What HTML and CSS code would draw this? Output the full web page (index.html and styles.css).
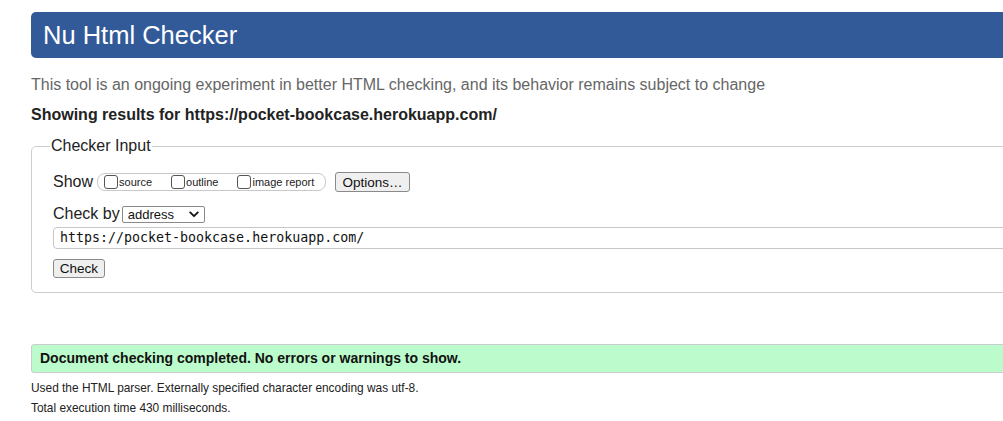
FILE: index.html
```html
<!DOCTYPE html>
<html lang="en">
<head>
<meta charset="utf-8">
<title>Nu Html Checker</title>
<link rel="stylesheet" href="styles.css">
</head>
<body>
<div class="page">
  <h1 class="title">Nu Html Checker</h1>
  <p class="note">This tool is an ongoing experiment in better HTML checking, and its behavior remains subject to change</p>
  <p class="showing">Showing results for https://pocket-bookcase.herokuapp.com/</p>
  <fieldset class="input-box">
    <legend class="legend">Checker Input</legend>
    <div class="row show-row">
      <span class="label">Show</span>
      <span class="opts">
        <label class="opt"><span class="cb"></span>source</label>
        <label class="opt"><span class="cb"></span>outline</label>
        <label class="opt"><span class="cb"></span>image report</label>
      </span>
      <button class="btn options" type="button">Options…</button>
    </div>
    <div class="row by-row">
      <span class="label">Check by</span>
      <span class="select">address<svg class="chev" width="10" height="7" viewBox="0 0 10 7"><path d="M1.2 1.4 L5 5.2 L8.8 1.4" fill="none" stroke="#111" stroke-width="1.8" stroke-linecap="round" stroke-linejoin="round"/></svg></span>
    </div>
    <div class="url">https://pocket-bookcase.herokuapp.com/</div>
    <div class="row">
      <button class="btn check" type="button">Check</button>
    </div>
  </fieldset>
  <div class="success">Document checking completed. No errors or warnings to show.</div>
  <p class="meta">Used the HTML parser. Externally specified character encoding was utf-8.</p>
  <p class="meta">Total execution time 430 milliseconds.</p>
</div>
</body>
</html>
```
FILE: styles.css
```css
html, body {
  margin: 0;
  padding: 0;
  overflow: hidden;
  background: #fff;
}
body {
  font-family: "Liberation Sans", Arial, Helvetica, sans-serif;
  color: #111;
}
.page {
  width: 1160px;
  padding: 12px 0 0 31px;
}
.title {
  margin: 0;
  height: 46px;
  line-height: 46px;
  padding: 0 12px;
  background: #335a98;
  color: #fff;
  font-size: 25.5px;
  font-weight: normal;
  border-radius: 5px;
}
.note {
  margin: 17px 0 0;
  font-size: 16px;
  line-height: 20px;
  color: #666;
}
.showing {
  margin: 10px 0 0;
  font-size: 16px;
  line-height: 20px;
  font-weight: bold;
  color: #222;
}
.input-box {
  margin: 12px 0 0;
  padding: 16px 20px 14px 21px;
  border: 1px solid #cdcdcd;
  border-radius: 5px;
}
.legend {
  padding: 0 1px;
  margin-left: -3px;
  font-size: 16px;
  line-height: 18px;
  color: #222;
}
.row {
  display: flex;
  align-items: center;
}
.label {
  font-size: 16px;
  color: #222;
}
.show-row {
  height: 22px;
}
.opts {
  display: inline-flex;
  align-items: center;
  margin-left: 4px;
  height: 16px;
  padding: 0 4px 0 6px;
  border: 1px solid #c8c8c8;
  border-radius: 8px;
  width: 217px;
}
.opt {
  display: inline-flex;
  align-items: center;
  font-size: 11px;
  color: #222;
}
.opt + .opt {
  margin-left: 19px;
}
.cb {
  width: 12px;
  height: 12px;
  border: 1px solid #555;
  border-radius: 3px;
  margin-right: 1px;
  box-sizing: content-box;
}
.btn {
  font-family: "Liberation Sans", Arial, Helvetica, sans-serif;
  font-size: 13.5px;
  color: #111;
  background: #efefef;
  border: 1px solid #8a8a8a;
  border-radius: 3px;
  padding: 0;
}
.options {
  margin-left: 9px;
  width: 75px;
  height: 20px;
}
.by-row {
  margin-top: 11px;
  height: 20px;
}
.select {
  position: relative;
  display: inline-flex;
  align-items: center;
  box-sizing: border-box;
  margin-left: 2px;
  width: 83px;
  height: 17px;
  padding-left: 5px;
  border: 1px solid #8a8a8a;
  border-radius: 2px;
  font-size: 13px;
  color: #111;
}
.chev {
  position: absolute;
  right: 5px;
  top: 4px;
}
.url {
  margin-top: 3px;
  height: 22px;
  box-sizing: border-box;
  padding-left: 6px;
  border: 1px solid #c8c8c8;
  border-radius: 4px;
  font-family: "DejaVu Sans Mono", "Liberation Mono", monospace;
  font-size: 13.3px;
  line-height: 20px;
  color: #111;
}
.check {
  margin-top: 10px;
  width: 52px;
  height: 19px;
}
.success {
  margin-top: 51px;
  height: 29px;
  box-sizing: border-box;
  padding-left: 8px;
  line-height: 27px;
  background: #bcfccc;
  border: 1px solid #cccccc;
  border-radius: 3px;
  font-size: 14px;
  font-weight: bold;
  color: #111;
}
.meta {
  margin: 8px 0 0;
  font-size: 11.9px;
  line-height: 14px;
  color: #222;
}
.meta + .meta {
  margin-top: 6px;
}
```
